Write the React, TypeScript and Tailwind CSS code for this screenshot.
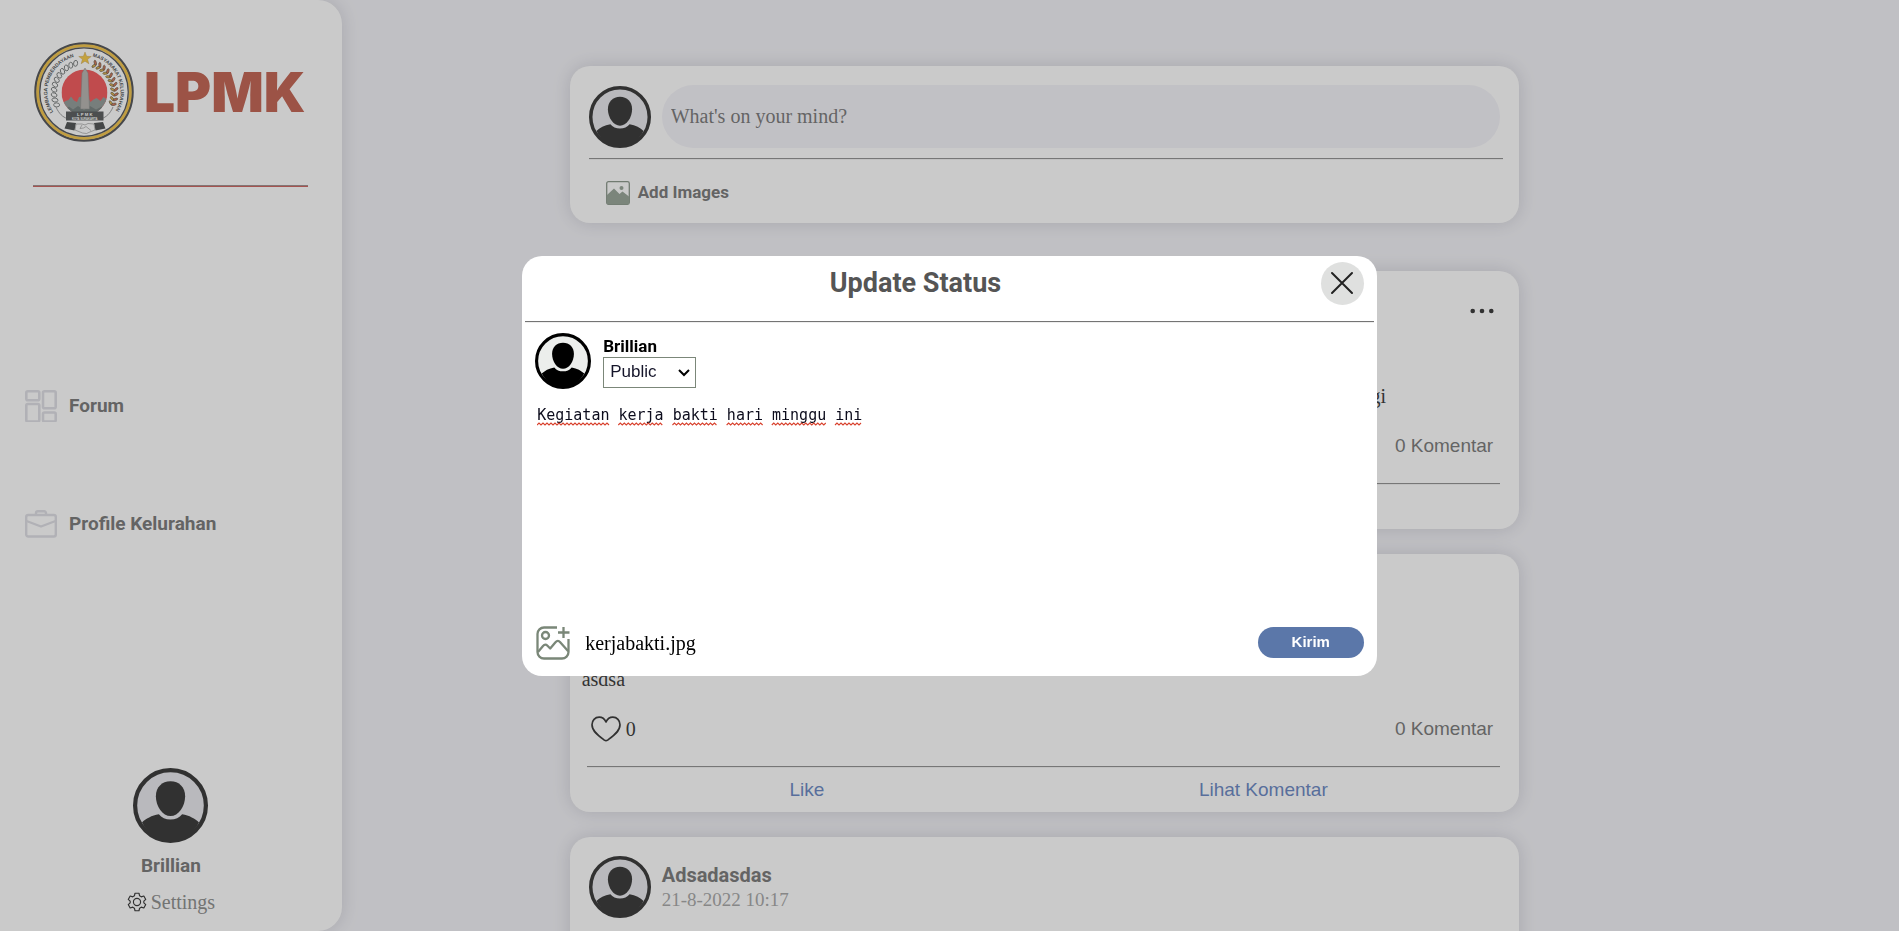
import { useState } from "react";

const SERIF = "font-['Liberation_Serif',serif]";

function Avatar({ className, fill = "#e3e3e9" }: { className: string; fill?: string }) {
  return (
    <svg viewBox="0 0 100 100" className={className} role="img" aria-label="Avatar">
      <circle cx="50" cy="50" r="47.2" fill={fill} stroke="#000" strokeWidth="5.6" />
      <path
        d="M50 17.500c11.500 0 19.500 8 19.500 20C69.500 51 60.500 64 50 64S30.500 51 30.500 37.500c0-12 8-20 19.500-20z"
        fill="#000"
      />
      <path
        d="M12 72.500C17 67.500 25 63 34.500 61.500 38 66 43.500 68.500 50 68.500S62 66 65.500 61.500C75 63 83 67.500 88 72.500 80 88 66 97.500 50 97.500S20 88 12 72.500z"
        fill="#000"
      />
    </svg>
  );
}

const CHAIN = Array.from({ length: 11 }, (_, i) => 156 + i * 9.7);
const WHEAT = Array.from({ length: 11 }, (_, i) => -68 + i * 9.2);

function Emblem() {
  return (
    <svg viewBox="0 0 200 200" className="size-[100px] shrink-0" role="img" aria-label="Lambang LPMK">
      <defs>
        <path id="arc-left" d="M38.500 140 A73 73 0 0 1 95 27.200" />
        <path id="arc-right" d="M117 29 A73 73 0 0 1 154 149" />
        <clipPath id="disc">
          <circle cx="101" cy="101" r="46" />
        </clipPath>
      </defs>
      <circle cx="100" cy="100" r="97" fill="#fff" stroke="#23262c" strokeWidth="5" />
      <circle cx="100" cy="100" r="92.500" fill="none" stroke="#eeb41c" strokeWidth="6" />
      <circle cx="100" cy="100" r="88.500" fill="none" stroke="#23262c" strokeWidth="2.500" />
      <text fill="#22261f" fontFamily="Liberation Sans, sans-serif" fontWeight="700" fontSize="10">
        <textPath href="#arc-left">LEMBAGA PEMBERDAYAAN</textPath>
      </text>
      <text fill="#22261f" fontFamily="Liberation Sans, sans-serif" fontWeight="700" fontSize="10">
        <textPath href="#arc-right">MASYARAKAT KELURAHAN</textPath>
      </text>
      <path d="M44 130c6 14 14 20 22 23M158 130c-6 14-14 20-22 23" stroke="#55585a" strokeWidth="1.500" fill="none" />
      {CHAIN.map((a) => (
        <g key={a} transform={`translate(101 101) rotate(${a}) translate(61 0)`}>
          <ellipse rx="6" ry="4" fill="#fff" stroke="#444a4a" strokeWidth="1.700" transform="rotate(25)" />
        </g>
      ))}
      {WHEAT.map((a) => (
        <g key={a} transform={`translate(101 101) rotate(${a}) translate(60 0)`}>
          <ellipse cx="-4" rx="5" ry="2.200" fill="#e5a81c" stroke="#40331c" strokeWidth="1.400" transform="rotate(35)" />
          <ellipse cx="4" rx="5" ry="2.200" fill="#d9532c" stroke="#40331c" strokeWidth="1.400" transform="rotate(-35)" />
        </g>
      ))}
      <g clipPath="url(#disc)">
        <rect x="55" y="55" width="92" height="92" fill="#ee2c2f" />
        <path
          d="M55 124l8-6 6-2 5-7 6 8 6 3 4-10h18l5 10 6-5 6-3 8 6 6-8 8 6v31H55z"
          fill="#76807d"
        />
        <path d="M60 147v-10l10-8 8 6 10-7 12 8 12-8 12 7 12-6 10 8v10z" fill="#53605e" />
      </g>
      <path d="M96 62l6-10 6 10 3 72h-18z" fill="#a3a09c" stroke="#6d6c69" strokeWidth="1" />
      <path
        d="M102 20l3.200 8.600 9.300.400-7.300 5.700 2.500 8.800-7.700-5.100-7.700 5.100 2.500-8.800-7.300-5.700 9.300-.400z"
        fill="#f6bd17"
        stroke="#a8791b"
        strokeWidth=".800"
      />
      <rect x="64" y="139" width="75" height="18" fill="#2d3133" />
      <text x="101.500" y="147.500" textAnchor="middle" fontFamily="Liberation Sans, sans-serif" fontWeight="700" fontSize="8.500" fill="#fff">
        L P M K
      </text>
      <text x="101.500" y="155" textAnchor="middle" fontFamily="Liberation Sans, sans-serif" fontWeight="700" fontSize="5.500" fill="#fff">
        KOTA SURAKARTA
      </text>
      <path d="M66 160l18 2-3 15-20-4zM138 160l-18 2 3 15 20-4z" fill="#202425" />
      <path
        d="M84 164l12 0 6 2 6-3 12 1 2 12-8 3-9 4-8-1-15-6zM96 166l-4 7 7-1 5-3 10 8"
        fill="#fff"
        stroke="#777"
        strokeWidth="1.300"
      />
    </svg>
  );
}

function GridIcon() {
  return (
    <svg viewBox="0 0 32 32" className="size-8 shrink-0" fill="none" stroke="#d6d6de" strokeWidth="2.600">
      <rect x="1.300" y="1.300" width="13" height="9" rx="1.500" />
      <rect x="18" y="1.300" width="12.700" height="17" rx="1.500" />
      <rect x="1.300" y="14" width="13" height="17.500" rx="1.500" />
      <rect x="18" y="22.500" width="12.700" height="9" rx="1.500" />
    </svg>
  );
}

function BriefcaseIcon() {
  return (
    <svg viewBox="0 0 32 32" className="size-8 shrink-0" fill="none" stroke="#d6d6de" strokeWidth="2.400" strokeLinejoin="round">
      <rect x="1.200" y="7" width="29.600" height="21.500" rx="2" />
      <path d="M11 7V5a1.800 1.800 0 0 1 1.800-1.800h6.400A1.800 1.800 0 0 1 21 5v2M1.500 13L16 18.500 30.500 13" />
    </svg>
  );
}

function GearIcon() {
  return (
    <svg viewBox="0 0 24 24" className="size-5 shrink-0" fill="none" stroke="#000" strokeWidth="1.400" strokeLinejoin="round">
      <path d="M9.600 1.500h4.800l.7 3.100 2 1.200 3.100-1 2.300 4.100-2.300 2.100v2l2.300 2.100-2.300 4.100-3.100-1-2 1.200-.7 3.100H9.600l-.7-3.100-2-1.200-3.100 1-2.300-4.100L3.800 13v-2L1.500 8.900l2.300-4.100 3.100 1 2-1.200z" />
      <circle cx="12" cy="12" r="4.300" />
    </svg>
  );
}

function PictureIcon() {
  return (
    <svg viewBox="0 0 24 24" className="size-6 shrink-0">
      <rect x=".700" y=".700" width="22.600" height="22.600" rx="1.800" fill="none" stroke="#6c7c6c" strokeWidth="1.300" />
      <path d="M1 14l7-6.500 5.500 5.500 3-2.500 6.500 5V22a1.200 1.200 0 0 1-1.200 1.200H2.200A1.200 1.200 0 0 1 1 22z" fill="#7c8c7c" />
      <circle cx="15.500" cy="7" r="2" fill="#7c8c7c" />
    </svg>
  );
}

function AddPictureIcon() {
  return (
    <svg viewBox="0 0 34 34" className="size-[34px] shrink-0" fill="none" stroke="#7a8778" strokeWidth="2.300" strokeLinejoin="round">
      <path d="M21 1.500H8A6.500 6.500 0 0 0 1.500 8v18A6.500 6.500 0 0 0 8 32.500h18a6.500 6.500 0 0 0 6.500-6.500V13" />
      <circle cx="9.500" cy="9.500" r="3.500" />
      <path d="M27.500 1v11M22 6.500h11.500" />
      <path d="M2 26l5-6c1.500-1.700 3-1.700 4.500-.200l2.700 2.700 5.300-6.300c1.500-1.700 3.200-1.700 4.700 0l8 9" />
    </svg>
  );
}

function HeartIcon() {
  return (
    <svg viewBox="0 0 30 26" className="h-[26px] w-[30px] shrink-0" fill="none" stroke="#000" strokeWidth="1.700" strokeLinejoin="round">
      <path d="M15 6C13.500 2.800 11 1.200 8.200 1.200 4 1.200 1 4.300 1 8.700c0 6.800 7.500 11.800 12.400 15.400 1.200.8 2 .8 3.200 0C21.500 20.500 29 15.500 29 8.700c0-4.400-3-7.500-7.200-7.500C19 1.200 16.500 2.800 15 6z" />
    </svg>
  );
}

function Divider({ className = "" }: { className?: string }) {
  return <hr className={`border-t border-b border-t-[#747474] border-b-[#eeeeee] ${className}`} />;
}

function Sidebar() {
  return (
    <aside className="flex h-full w-[18%] shrink-0 flex-col rounded-r-[24px] bg-white shadow-[0_0_18px_rgba(0,0,40,0.18)]">
      <div className="flex items-center gap-[10px] pt-[42px] pl-[34px]">
        <Emblem />
        <span className="font-['Inter',sans-serif] text-[55px] leading-[60px] font-black text-[#b23a23]">LPMK</span>
      </div>
      <hr className="mt-[43px] mr-[34px] ml-[33px] border-t border-b border-t-[#8a7472] border-b-[#c23a34]" />
      <nav className="mt-[203px] flex flex-col gap-[86px] pl-[25px] font-['Roboto',sans-serif] text-[19px] font-bold text-[#555]">
        <a href="#forum" className="flex items-center gap-3">
          <GridIcon />
          Forum
        </a>
        <a href="#profile" className="flex items-center gap-3">
          <BriefcaseIcon />
          Profile Kelurahan
        </a>
      </nav>
      <div className="mt-auto flex flex-col items-center pb-4">
        <Avatar className="size-[75px]" />
        <p className="mt-2 font-['Roboto',sans-serif] text-[19px] leading-[30px] font-bold text-[#555]">Brillian</p>
        <a href="#settings" className={`mt-2 flex items-center gap-1 text-[20px] leading-[26px] text-[#6e706e] ${SERIF}`}>
          <GearIcon />
          Settings
        </a>
      </div>
    </aside>
  );
}

const CARD = "rounded-[20px] bg-white shadow-[0_0_18px_rgba(0,0,40,0.18)]";

function Composer() {
  return (
    <section className={`${CARD} px-[19px] pt-[19px] pb-[18px]`}>
      <div className="flex items-center gap-[11px]">
        <Avatar className="size-[62px] shrink-0" />
        <input
          type="text"
          aria-label="What's on your mind?"
          placeholder="What's on your mind?"
          className={`h-[63px] min-w-0 flex-1 rounded-full bg-[#f1f0f7] px-[9px] text-[20px] text-[#555] placeholder:text-[#555] ${SERIF}`}
        />
      </div>
      <Divider className="mt-[10px] -mr-[3px]" />
      <button type="button" className="mt-[20px] ml-[17px] flex items-center gap-2 font-['Roboto',sans-serif] text-[17px] leading-[25px] font-bold text-[#555]">
        <PictureIcon />
        Add Images
      </button>
    </section>
  );
}

type PostData = { id: number; name: string; date: string; body: string; own?: boolean };

const POSTS: PostData[] = [
  {
    id: 1,
    name: "Brillian",
    date: "21-8-2022 10:25",
    body: "Selamat pagi, bapak dan ibu warga kelurahan, mohon kehadirannya, untuk rapat di hari minggu pagi",
    own: true,
  },
  { id: 2, name: "Brillian", date: "21-8-2022 10:20", body: "asdsa" },
  { id: 3, name: "Adsadasdas", date: "21-8-2022 10:17", body: "asdsa" },
];

function Post({ post }: { post: PostData }) {
  return (
    <article className={`${CARD} pt-[19px] pb-[9px]`}>
      <header className="flex items-start gap-[11px] pr-[25px] pl-[19px]">
        <Avatar className="size-[62px] shrink-0" />
        <div className="flex-1 pt-[6px]">
          <h2 className="font-['Roboto',sans-serif] text-[20px] leading-[26px] font-bold text-[#555]">{post.name}</h2>
          <p className={`text-[19px] leading-[24px] text-[#8f8f8f] ${SERIF}`}>{post.date}</p>
        </div>
        {post.own && (
          <button type="button" aria-label="Post menu" className="mt-[16px]">
            <svg viewBox="0 0 24 10" className="h-[10px] w-6" fill="#000">
              <circle cx="2.700" cy="5" r="2.300" />
              <circle cx="12" cy="5" r="2.300" />
              <circle cx="21.300" cy="5" r="2.300" />
            </svg>
          </button>
        )}
      </header>
      <p className={`mt-[32px] px-3 text-[20px] leading-[24px] text-black ${SERIF}`}>{post.body}</p>
      <div className="mt-[25px] flex items-center justify-between pr-[26px] pl-[21px]">
        <span className={`flex items-center gap-[5px] text-[20px] leading-[26px] text-black ${SERIF}`}>
          <HeartIcon />0
        </span>
        <span className="font-['Liberation_Sans',sans-serif] text-[19px] leading-[24px] text-[#555]">0 Komentar</span>
      </div>
      <Divider className="mt-[24px] mr-[19px] ml-[17px]" />
      <div className="mx-[9px] flex pt-[9px] font-['Liberation_Sans',sans-serif] text-[19px] leading-[26px] text-[#4267b2]">
        <button type="button" className="w-[49%]">
          Like
        </button>
        <button type="button" className="w-[49%]">
          Lihat Komentar
        </button>
      </div>
    </article>
  );
}

const CHAR_WIDTH = 9.03;

function Squiggles({ text }: { text: string }) {
  const paths: string[] = [];
  for (const word of text.matchAll(/\S+/g)) {
    const start = word.index * CHAR_WIDTH;
    const end = start + word[0].length * CHAR_WIDTH;
    let d = `M${start} 3`;
    for (let x = start + 2, up = true; x <= end; x += 2, up = !up) d += `L${x} ${up ? 1 : 3}`;
    paths.push(d);
  }
  return (
    <svg className="pointer-events-none absolute top-5 left-[15px] h-1 w-full" fill="none" stroke="#d8402c" strokeWidth="1.100">
      {paths.map((d) => (
        <path key={d} d={d} />
      ))}
    </svg>
  );
}

function StatusDialog() {
  const [text, setText] = useState("Kegiatan kerja bakti hari minggu ini");
  return (
    <div className="fixed inset-0 flex items-center justify-center bg-[#7b7b7b]/40">
      <div role="dialog" aria-labelledby="dialog-title" className="flex min-h-[420px] w-[45%] flex-col rounded-[20px] bg-white">
        <div className="flex items-start gap-3 pt-[6px] pr-[13px]">
          <h1 id="dialog-title" className="flex-1 text-center font-['Roboto',sans-serif] text-[27px] leading-[42px] font-bold text-[#555]">
            Update Status
          </h1>
          <button type="button" aria-label="Close" className="flex size-[43px] items-center justify-center rounded-full bg-[#dfe0df]">
            <svg viewBox="0 0 24 24" className="size-6" stroke="#222" strokeWidth="2" strokeLinecap="round">
              <path d="M2 2l20 20M22 2L2 22" />
            </svg>
          </button>
        </div>
        <Divider className="mx-[3px] mt-[16px]" />
        <div className="flex gap-3 pt-[10px] pl-[13px]">
          <Avatar className="size-14 shrink-0" fill="#eceeec" />
          <div>
            <label htmlFor="visibility" className="block pt-[2px] font-['Roboto',sans-serif] text-[17px] leading-[22px] font-bold text-black">
              Brillian
            </label>
            <div className="relative">
              <select
                id="visibility"
                className="block h-[31px] w-[93px] appearance-none border border-[#7b8779] bg-white pl-[6px] font-['Liberation_Sans',sans-serif] text-[17px] text-[#15152a]"
              >
                <option>Public</option>
                <option>Private</option>
              </select>
              <svg viewBox="0 0 12 8" className="pointer-events-none absolute top-[12px] right-[6px] h-2 w-3" fill="none" stroke="#000" strokeWidth="2">
                <path d="M1 1l5 5 5-5" />
              </svg>
            </div>
          </div>
        </div>
        <div className="relative mt-[13px] flex flex-1">
          <textarea
            aria-label="Status"
            spellCheck={false}
            value={text}
            onChange={(e) => setText(e.target.value)}
            className="flex-1 resize-none px-[15px] pt-[3px] font-['DejaVu_Sans_Mono',monospace] text-[15px] leading-[20px] text-[#0c0c1c] outline-none"
          />
          <Squiggles text={text} />
        </div>
        <div className="flex items-center justify-between pr-[13px] pb-[16px] pl-[14px]">
          <label className={`flex cursor-pointer items-center gap-[15px] text-[20px] leading-[24px] text-black ${SERIF}`}>
            <AddPictureIcon />
            <input type="file" accept="image/*" className="sr-only" />
            kerjabakti.jpg
          </label>
          <button type="button" className="h-[31px] w-[106px] rounded-full bg-[#5b77a9] font-['Liberation_Sans',sans-serif] text-[15px] font-bold text-white">
            Kirim
          </button>
        </div>
      </div>
    </div>
  );
}

export default function App() {
  return (
    <div className="flex h-screen overflow-hidden bg-[#efeff5]">
      <Sidebar />
      <main className="ml-[12%] flex w-[50%] flex-col pt-[66px]">
        <Composer />
        <div className="mt-12 flex flex-col gap-[25px]">
          {POSTS.map((post) => (
            <Post key={post.id} post={post} />
          ))}
        </div>
      </main>
      <StatusDialog />
    </div>
  );
}
